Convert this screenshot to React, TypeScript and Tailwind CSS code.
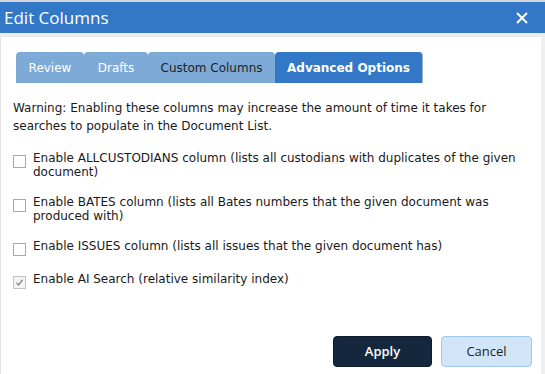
import React from 'react';

const body = { fontFamily: '"DejaVu Sans", Verdana, sans-serif' };
const ui = { fontFamily: '"Open Sans", "Noto Sans", sans-serif' };

const tabs = [
  { label: 'Review', active: false, cls: 'w-[68px] text-white' },
  { label: 'Drafts', active: false, cls: 'w-[64px] text-white' },
  { label: 'Custom Columns', active: false, cls: 'w-[127px] text-[#1e1e1e]' },
  { label: 'Advanced Options', active: true, cls: 'w-[148px] text-white font-bold' },
];

const options = [
  { label: 'Enable ALLCUSTODIANS column (lists all custodians with duplicates of the given document)', checked: false },
  { label: 'Enable BATES column (lists all Bates numbers that the given document was produced with)', checked: false },
  { label: 'Enable ISSUES column (lists all issues that the given document has)', checked: false },
  { label: 'Enable AI Search (relative similarity index)', checked: true },
];

const Checkbox: React.FC<{ checked: boolean }> = ({ checked }) => (
  <span
    className={`mt-[4px] flex h-[13px] w-[13px] shrink-0 items-center justify-center border ${
      checked ? 'border-[#c4c4c4] bg-[#f4f4f4]' : 'border-[#a9a9a9] bg-white'
    }`}
  >
    {checked && (
      <svg width="9" height="9" viewBox="0 0 9 9">
        <path d="M1.5 4.8 L3.6 7 L7.6 1.8" fill="none" stroke="#8c8c8c" strokeWidth="1.4" />
      </svg>
    )}
  </span>
);

export default function App() {
  return (
    <div className="flex h-[374px] w-[545px] flex-col overflow-hidden bg-[#f0f0f0]">
      <div className="h-[2px] bg-[#d3d6da]" />
      <div className="flex h-[31px] items-center justify-between bg-[#3278c6] pl-[4px] pr-[17px]">
        <span className="text-[17px] leading-none text-white" style={ui}>
          Edit Columns
        </span>
        <svg width="12" height="12" viewBox="0 0 12 12">
          <path d="M1 1 L11 11 M11 1 L1 11" stroke="white" strokeWidth="2" />
        </svg>
      </div>
      <div className="h-[4px] bg-[#ececec]" />
      <div className="flex flex-1">
        <div className="w-[1px] bg-[#e4e4e4]" />
        <div className="flex flex-1 flex-col bg-white" style={body}>
          <div className="ml-[15px] mt-[15px] flex h-[31px]">
            {tabs.map((t) => (
              <div
                key={t.label}
                className={`flex items-center justify-center rounded-t-[4px] text-[12px] ${t.cls} ${
                  t.active ? 'bg-[#3278c6] border-r border-[#9fb4c8]' : 'bg-[#7eaad8]'
                }`}
              >
                {t.label}
              </div>
            ))}
          </div>

          <p className="ml-[12px] mt-[16px] w-[480px] text-[12px] leading-[18px] text-[#1a1a1a]">
            Warning: Enabling these columns may increase the amount of time it takes for searches to populate in the
            Document List.
          </p>

          <div className="mx-[12px] mt-[16px] flex flex-col gap-[16px]">
            {options.map((o) => (
              <label key={o.label} className="flex gap-[7px] pr-[8px] text-[12px] leading-[14px] text-[#1a1a1a]">
                <Checkbox checked={o.checked} />
                <span>{o.label}</span>
              </label>
            ))}
          </div>

          <div className="mt-auto flex justify-end gap-[9px] pb-[7px] pr-[9px]" style={ui}>
            <button className="h-[31px] w-[99px] rounded-[4px] border border-[#0d1b2c] bg-[#15273d] text-[13px] font-semibold text-white">
              Apply
            </button>
            <button className="h-[31px] w-[91px] rounded-[4px] border border-[#9fc9ec] bg-[#d0e5f8] text-[13px] text-[#1e1e1e]">
              Cancel
            </button>
          </div>
        </div>
        <div className="w-[4px] bg-[#f0f0f0]" />
      </div>
    </div>
  );
}
